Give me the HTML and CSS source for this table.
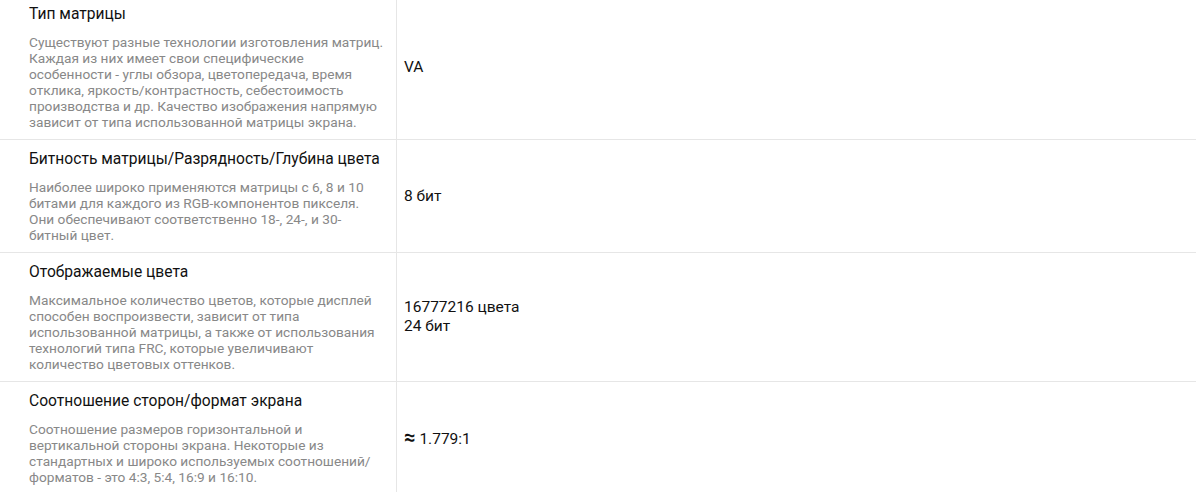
FILE: index.html
```html
<!DOCTYPE html>
<html>
<head>
    <title>Характеристики экрана</title>
    <meta name="viewport" content="width=device-width, initial-scale=1">
    <link rel="stylesheet" href="styles.css">
</head>
<body>
    <div class="specs">
        <div class="spec-row">
            <div class="spec-name">
                <div class="spec-title">Тип матрицы</div>
                <div class="spec-desc">Существуют разные технологии изготовления матриц. Каждая из них имеет свои специфические особенности - углы обзора, цветопередача, время отклика, яркость/контрастность, себестоимость производства и др. Качество изображения напрямую зависит от типа использованной матрицы экрана.</div>
            </div>
            <div class="spec-value"><div>VA</div></div>
        </div>
        <div class="spec-row">
            <div class="spec-name">
                <div class="spec-title">Битность матрицы/Разрядность/Глубина цвета</div>
                <div class="spec-desc">Наиболее широко применяются матрицы с 6, 8 и 10 битами для каждого из RGB-компонентов пикселя. Они обеспечивают соответственно 18-, 24-, и 30-битный цвет.</div>
            </div>
            <div class="spec-value"><div>8 бит</div></div>
        </div>
        <div class="spec-row">
            <div class="spec-name">
                <div class="spec-title">Отображаемые цвета</div>
                <div class="spec-desc">Максимальное количество цветов, которые дисплей способен воспроизвести, зависит от типа использованной матрицы, а также от использования технологий типа FRC, которые увеличивают количество цветовых оттенков.</div>
            </div>
            <div class="spec-value"><div>16777216 цвета<br>24 бит</div></div>
        </div>
        <div class="spec-row">
            <div class="spec-name">
                <div class="spec-title">Соотношение сторон/формат экрана</div>
                <div class="spec-desc">Соотношение размеров горизонтальной и вертикальной стороны экрана. Некоторые из стандартных и широко используемых соотношений/форматов - это 4:3, 5:4, 16:9 и 16:10.</div>
            </div>
            <div class="spec-value"><div><span class="approx">≈</span> 1.779:1</div></div>
        </div>
    </div>
</body>
</html>
```

FILE: styles.css
```css
* {
    margin: 0;
    padding: 0;
    box-sizing: border-box;
}

body {
    background: #ffffff;
    color: #111;
    font-family: Roboto, 'Noto Sans', sans-serif;
}

.specs {
    margin-top: -5px;
}

.spec-row {
    display: grid;
    grid-template-columns: 397px 1fr;
    border-bottom: 1px solid #e6e6e6;
}

.spec-row:last-child {
    border-bottom: none;
}

.spec-name {
    padding: 9px 11px 9px 29px;
    border-right: 1px solid #e6e6e6;
}

.spec-title {
    margin-right: -12px;
    font-size: 15.6px;
    line-height: 20px;
    color: #111;
    white-space: nowrap;
}

.spec-desc {
    margin-top: 10px;
    font-size: 13.7px;
    line-height: 16px;
    color: #888;
}

.spec-value {
    display: flex;
    align-items: center;
    padding: 0 16px 0 7px;
    font-size: 15.5px;
    line-height: 19px;
    color: #111;
}

.approx {
    font-weight: 700;
    font-size: 20px;
    line-height: 19px;
}
```
